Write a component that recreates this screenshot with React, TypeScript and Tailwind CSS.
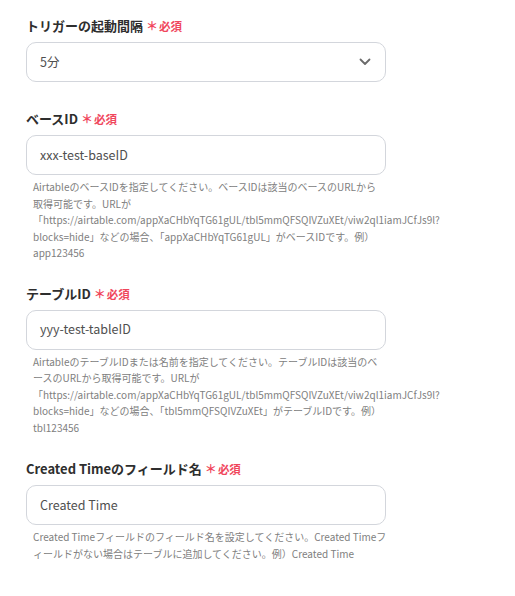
import React from "react";

const FONT = { fontFamily: '"Noto Sans CJK JP", "Noto Sans", sans-serif' };

function Label({ children }: { children: React.ReactNode }) {
  return (
    <div className="flex items-center h-[20px] text-[13px] font-bold text-[#2e2e2e] leading-[20px]">
      <span>{children}</span>
      <span className="ml-[3px] text-[#f0465c] text-[11.5px] font-bold flex items-center">
        <span className="text-[12px] mr-[1px]">＊</span>
        <span>必須</span>
      </span>
    </div>
  );
}

function TextBox({ value }: { value: string }) {
  return (
    <div className="mt-[6px] h-[40px] w-[360px] rounded-[10px] border border-[#d3d6dc] bg-white flex items-center pl-[13px] text-[12.5px] text-[#4f4f4f]">
      {value}
    </div>
  );
}

function Desc({ children, wide }: { children: React.ReactNode; wide?: boolean }) {
  return (
    <div className={(wide ? "w-[362px]" : "w-[354px]") + " mt-[4px] pl-[7px] text-[10px] leading-[16.5px] text-[#808080]"}>
      {children}
    </div>
  );
}

export default function App() {
  return (
    <div className="bg-white min-h-[596px] w-[515px] pl-[26px] pt-[16px]" style={FONT}>
      <div className="mb-[27px]">
        <Label>トリガーの起動間隔</Label>
        <div className="mt-[6px] h-[40px] w-[360px] rounded-[10px] border border-[#d3d6dc] bg-white flex items-center justify-between pl-[13px] pr-[14px] text-[12.5px] text-[#4f4f4f]">
          <span>5分</span>
          <svg width="12" height="8" viewBox="0 0 12 8" fill="none">
            <path d="M1.5 1.5 L6 6 L10.5 1.5" stroke="#6b6b6b" strokeWidth="1.8" strokeLinecap="round" strokeLinejoin="round" />
          </svg>
        </div>
      </div>

      <div className="mb-[22px]">
        <Label>ベースID</Label>
        <TextBox value="xxx-test-baseID" />
        <Desc>
          AirtableのベースIDを指定してください。ベースIDは該当のベースのURLから取得可能です。URLが「https://airtable.com/appXaCHbYqTG61gUL/tbl5mmQFSQIVZuXEt/viw2ql1iamJCfJs9l?<wbr />blocks=hide」などの場合、「appXaCHbYqTG61gUL」がベースIDです。例）app123456
        </Desc>
      </div>

      <div className="mb-[23px]">
        <Label>テーブルID</Label>
        <TextBox value="yyy-test-tableID" />
        <Desc>
          AirtableのテーブルIDまたは名前を指定してください。テーブルIDは該当のベースのURLから取得可能です。URLが「https://airtable.com/appXaCHbYqTG61gUL/tbl5mmQFSQIVZuXEt/viw2ql1iamJCfJs9l?<wbr />blocks=hide」などの場合、「tbl5mmQFSQIVZuXEt」がテーブルIDです。例）tbl123456
        </Desc>
      </div>

      <div>
        <Label>Created Timeのフィールド名</Label>
        <TextBox value="Created Time" />
        <Desc wide>
          Created Timeフィールドのフィールド名を設定してください。Created Timeフィールドがない場合はテーブルに追加してください。例）Created Time
        </Desc>
      </div>
    </div>
  );
}
